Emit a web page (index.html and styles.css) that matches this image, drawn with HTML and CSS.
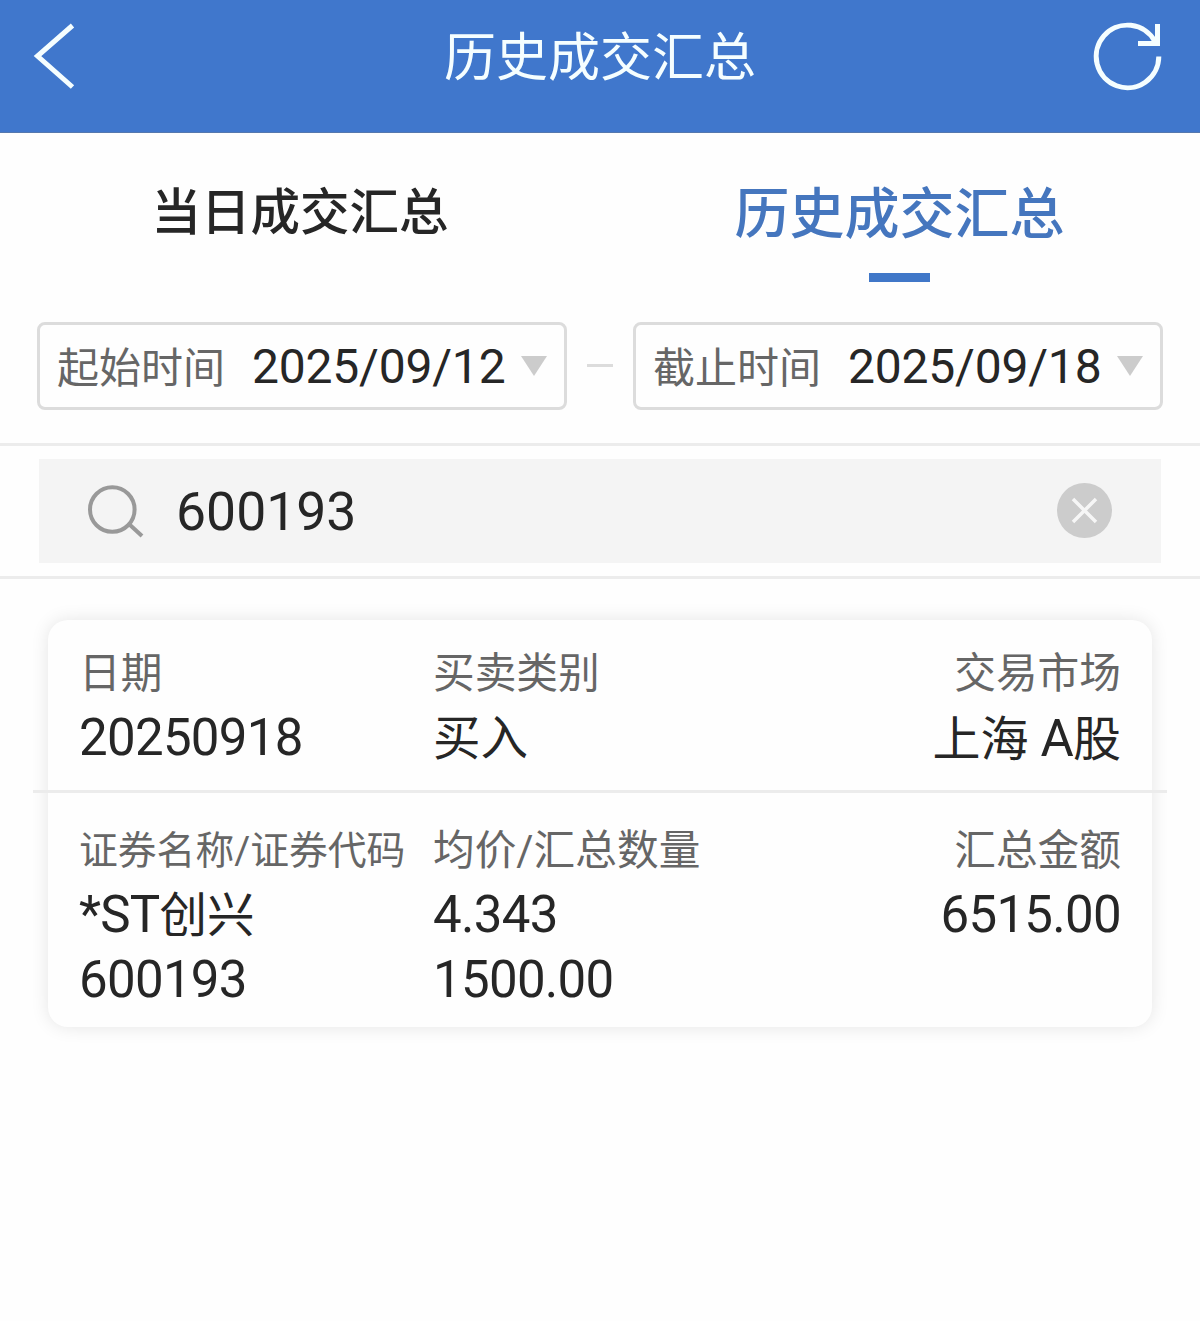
FILE: index.html
```html
<!DOCTYPE html>
<html lang="zh-CN">
<head>
<meta charset="utf-8">
<title>历史成交汇总</title>
<link rel="stylesheet" href="styles.css">
</head>
<body>
<header class="topbar">
  <svg class="back" width="44" height="70" viewBox="0 0 44 70"><path d="M41.500 4.500 6.500 35 41.500 66"/></svg>
  <h1 class="title">历史成交汇总</h1>
  <svg class="refresh" width="72" height="72" viewBox="0 0 72 72"><path d="M66.800 36.500A31.300 31.300 0 1 1 63 21.500M65.500 4V24M46 23.500H68"/></svg>
</header>
<nav class="tabs">
  <a class="tab">当日成交汇总</a>
  <a class="tab tab-active">历史成交汇总</a>
</nav>
<section class="dates">
  <div class="date"><span class="date-label">起始时间</span><span class="date-value">2025/09/12</span><i class="caret"></i></div>
  <i class="dash"></i>
  <div class="date"><span class="date-label">截止时间</span><span class="date-value">2025/09/18</span><i class="caret"></i></div>
</section>
<section class="search">
  <div class="search-box">
    <svg class="magnifier" width="60" height="60" viewBox="0 0 60 60"><circle cx="27.300" cy="28.500" r="22.300"/><path d="M44.500 43.500 57 55"/></svg>
    <span class="query">600193</span>
    <svg class="clear" width="55" height="55" viewBox="0 0 55 55"><circle cx="27.500" cy="27.500" r="27.500"/><path d="M16 16 39 39M39 16 16 39"/></svg>
  </div>
</section>
<main class="list">
  <article class="card">
    <div class="row">
      <div class="cell"><div class="label">日期</div><div class="value num">20250918</div></div>
      <div class="cell"><div class="label">买卖类别</div><div class="value value-text">买入</div></div>
      <div class="cell cell-right"><div class="label">交易市场</div><div class="value value-text market">上海 <span class="num">A</span>股</div></div>
    </div>
    <div class="row row-second">
      <div class="cell"><div class="label label-small">证券名称/证券代码</div><div class="value value-text"><span class="num">*ST</span>创兴</div><div class="value num">600193</div></div>
      <div class="cell"><div class="label">均价/汇总数量</div><div class="value num">4.343</div><div class="value num">1500.00</div></div>
      <div class="cell cell-right"><div class="label">汇总金额</div><div class="value num">6515.00</div></div>
    </div>
  </article>
</main>
</body>
</html>
```
FILE: styles.css
```css
* { box-sizing: border-box; }
body {
  margin: 0;
  min-height: 1321px;
  background: #fefefe;
  color: #262626;
  font-family: Roboto, "Noto Sans CJK SC", sans-serif;
}
svg { display: block; fill: none; flex: none; }
.topbar {
  display: flex;
  align-items: center;
  justify-content: space-between;
  height: 133px;
  padding: 0 36px 21px 31px;
  background: #4077cc;
  border-bottom: 1px solid #5578ae;
}
.back, .refresh { stroke: #f5feff; stroke-width: 5; }
.title {
  margin: 0 0 0 33px;
  padding-top: 6px;
  font-size: 52px;
  line-height: 70px;
  font-weight: 400;
  color: #f5feff;
}
.tabs { display: grid; grid-template-columns: 1fr 1fr; height: 149px; }
.tab {
  display: flex;
  flex-direction: column;
  align-items: center;
  padding-top: 40px;
  font-size: 49.500px;
  line-height: 80px;
  font-weight: 500;
}
.tab-active { padding: 41px 1px 0 0; font-size: 55px; color: #4576be; }
.tab-active::after {
  content: "";
  width: 61px;
  height: 9px;
  margin-top: 19px;
  background: #4077c8;
}
.dates {
  display: flex;
  align-items: center;
  justify-content: space-between;
  height: 164px;
  padding: 40px 37px 33px;
  border-bottom: 3px solid #ececec;
}
.date {
  display: flex;
  align-items: center;
  width: 530px;
  height: 88px;
  padding: 0 17px;
  border: 3px solid #dcdcdc;
  border-radius: 8px;
  line-height: 82px;
}
.date-label { width: 195px; padding-top: 5px; font-size: 42px; line-height: 77px; color: #666; }
.date-value { width: 269px; padding-top: 2px; font-size: 48px; line-height: 80px; letter-spacing: -.2px; white-space: nowrap; }
.caret {
  border: 13px solid transparent;
  border-top: 20px solid #ccc;
  border-bottom: 0;
}
.dash { width: 26px; height: 3px; margin-bottom: 1px; background: #dcdcdc; }
.search { height: 133px; padding: 13px 39px; border-bottom: 3px solid #ececec; }
.search-box {
  display: flex;
  align-items: center;
  height: 104px;
  padding: 0 49px 0 46px;
  background: #f4f4f4;
}
.magnifier { stroke: #999; stroke-width: 4; }
.query { flex: 1; padding: 2px 0 0 31px; font-size: 53.500px; line-height: 102px; }
.clear { margin-bottom: 1px; }
.clear circle { fill: #ccc; }
.clear path { stroke: #f6f6f6; stroke-width: 3.500; }
.list { margin: 0 33px; padding: 41px 15px 30px; overflow: hidden; }
.card {
  height: 407px;
  border-radius: 20px;
  background: #fefefe;
  box-shadow: 0 0 18px rgba(0, 0, 0, .1);
}
.row {
  display: grid;
  grid-template-columns: 354px 330px 1fr;
  height: 173px;
  margin: 0 -15px;
  padding: 19px 46px 0;
  border-bottom: 3px solid #ececec;
}
.row-second { height: 234px; padding-top: 23px; border: 0; }
.cell { white-space: nowrap; }
.cell-right { text-align: right; }
.label { height: 66px; padding-top: 3px; font-size: 41.700px; line-height: 63px; color: #666; }
.label-small { font-size: 38.800px; }
.value { height: 65px; font-size: 47.500px; line-height: 65px; }
.value-text { padding-top: 2px; }
.market { font-size: 48px; }
.num { font-size: 51px; letter-spacing: -.7px; }
.value > .num { line-height: 1; }
```
